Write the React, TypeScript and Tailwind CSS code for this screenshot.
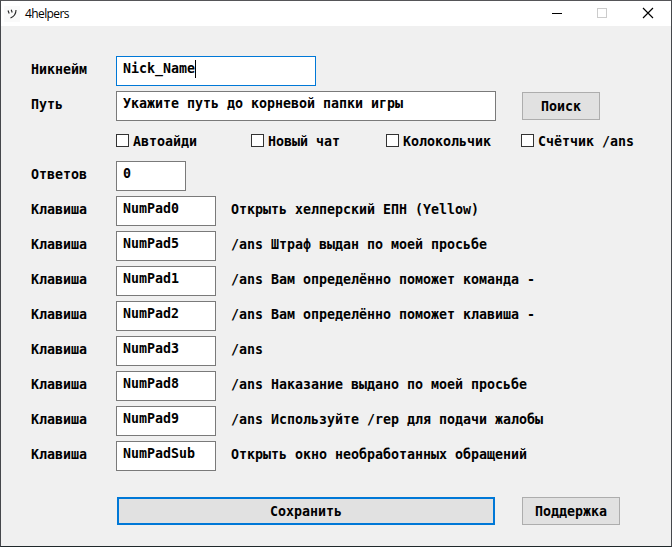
import React from "react";

const checks = ["Автоайди", "Новый чат", "Колокольчик", "Счётчик /ans"];

const hotkeys = [
  { key: "NumPad0", text: "Открыть хелперский ЕПН (Yellow)" },
  { key: "NumPad5", text: "/ans Штраф выдан по моей просьбе" },
  { key: "NumPad1", text: "/ans Вам определённо поможет команда -" },
  { key: "NumPad2", text: "/ans Вам определённо поможет клавиша -" },
  { key: "NumPad3", text: "/ans" },
  { key: "NumPad8", text: "/ans Наказание выдано по моей просьбе" },
  { key: "NumPad9", text: "/ans Используйте /rep для подачи жалобы" },
  { key: "NumPadSub", text: "Открыть окно необработанных обращений" },
];

function TitleBar() {
  return (
    <header className="flex h-[25px] shrink-0 items-center bg-white pl-[3px]">
      <svg width="16" height="16" viewBox="0 0 16 16" className="bg-[#fafafa]" fill="none" stroke="#222" strokeWidth="1.1">
        <path d="M4 4.500l1.200 3M7.200 3.800l1 2.700M12 4c0 3.500-2 6.500-5.500 8" />
      </svg>
      <span className="ml-[5px] flex-1 font-['Open_Sans',sans-serif] text-[12px] leading-4 tracking-[-0.6px]">
        4helpers
      </span>
      <svg width="128" height="25" viewBox="0 0 128 25" fill="none" shapeRendering="crispEdges">
        <path d="M9 12.500h10" stroke="#000" />
        <rect x="54.500" y="7.500" width="9" height="9" stroke="#ccc" />
        <path d="M100 7l10 10M110 7l-10 10" stroke="#000" shapeRendering="auto" strokeWidth="1.15" />
      </svg>
    </header>
  );
}

function Label({ children }: { children: React.ReactNode }) {
  return <span className="w-[85px] shrink-0 leading-[28px]">{children}</span>;
}

function Field({ value, className, caret }: { value: string; className: string; caret?: boolean }) {
  return (
    <div className={`flex h-[30px] shrink-0 items-start border bg-white pl-[6px] pt-[3px] leading-[18px] ${className}`}>
      <span>{value}</span>
      {caret && <span className="h-[18px] w-px bg-black" />}
    </div>
  );
}

function Button({ children, className }: { children: string; className: string }) {
  return (
    <button className={`flex h-7 shrink-0 items-center justify-center bg-[#e1e1e1] pt-[2px] leading-[22px] ${className}`}>
      {children}
    </button>
  );
}

export default function App() {
  return (
    <div className="flex h-[547px] w-[672px] flex-col overflow-hidden border border-t-[#555558] border-l-[#45474b] border-r-[#45474b] border-b-[#20282b] bg-[#f0f0f0] text-black">
      <TitleBar />
      <main className="flex flex-col gap-[5px] whitespace-pre pl-[30px] pt-[30px] font-['DejaVu_Sans_Mono',monospace] text-[13.3px] font-bold tracking-[-0.007px]">
        <div className="flex h-[30px]">
          <Label>Никнейм</Label>
          <Field value="Nick_Name" className="w-[200px] border-[#0078d7]" caret />
        </div>
        <div className="flex h-[30px]">
          <Label>Путь</Label>
          <Field value="Укажите путь до корневой папки игры" className="w-[380px] border-[#7a7a7a]" />
          <Button className="ml-[26px] mt-px w-[78px] border border-[#adadad]">Поиск</Button>
        </div>
        <div className="flex h-[30px] items-center pl-[85px]">
          {checks.map((name) => (
            <div key={name} className="flex w-[135px] shrink-0 items-center gap-1">
              <span className="mb-px size-[13px] shrink-0 border border-[#333] bg-white" />
              <span className="pt-px leading-[17px]">{name}</span>
            </div>
          ))}
        </div>
        <div className="flex h-[30px]">
          <Label>Ответов</Label>
          <Field value="0" className="w-[70px] border-[#7a7a7a]" />
        </div>
        {hotkeys.map((row) => (
          <div key={row.key} className="flex h-[30px]">
            <Label>Клавиша</Label>
            <Field value={row.key} className="w-[100px] border-[#7a7a7a]" />
            <span className="ml-[15px] leading-[28px]">{row.text}</span>
          </div>
        ))}
        <div className="mt-[21px] flex pl-[86px]">
          <Button className="w-[378px] border-2 border-[#0078d7]">Сохранить</Button>
          <Button className="ml-[27px] w-[98px] border border-[#adadad]">Поддержка</Button>
        </div>
      </main>
    </div>
  );
}
